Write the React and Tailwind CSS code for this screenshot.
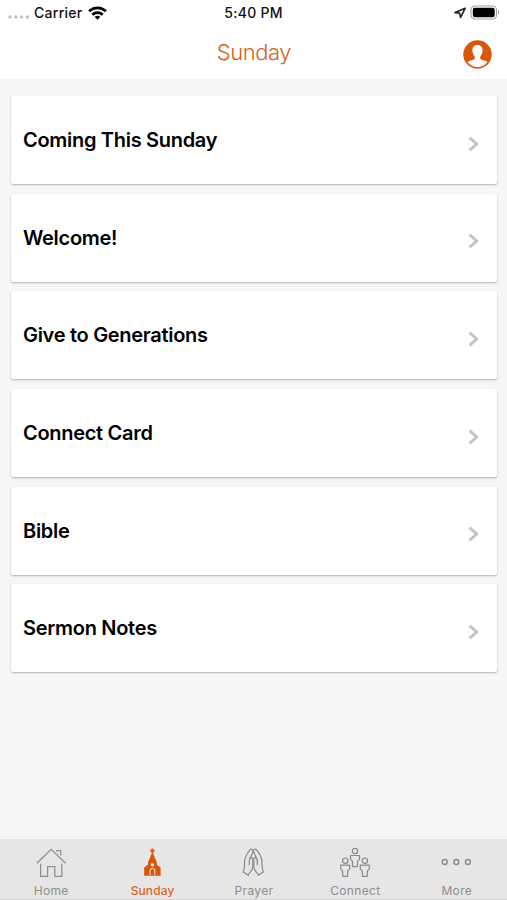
const sections = [
  'Coming This Sunday',
  'Welcome!',
  'Give to Generations',
  'Connect Card',
  'Bible',
  'Sermon Notes',
];

function StatusBar() {
  return (
    <div className="grid h-[26px] grid-cols-3 items-center text-[14px] font-medium text-[#111]">
      <div className="flex items-center pl-2">
        <svg width="22" height="6" viewBox="0 0 22 6" fill="#c4c4c4" className="mt-[7px]">
          <circle cx="2" cy="3" r="1.8" />
          <circle cx="7.8" cy="3" r="1.8" />
          <circle cx="13.6" cy="3" r="1.8" />
          <circle cx="19.4" cy="3" r="1.8" />
        </svg>
        <span className="-mt-px ml-1 tracking-[0.02em]">Carrier</span>
        <svg width="19" height="14" viewBox="0 0 19 14" fill="none" stroke="#000" strokeWidth="2.7" className="-mt-px ml-[5px]">
          <path d="M1.1 5.3C5.7 .7 13.3 .7 17.9 5.3" />
          <path d="M4.3 8.8C7.2 6 11.8 6 14.7 8.8" />
          <path d="M9.5 13.7 6.7 10.9C8.3 9.5 10.7 9.5 12.3 10.9Z" fill="#000" stroke="none" />
        </svg>
      </div>
      <span className="-mt-px text-center tracking-[0.02em]">5:40 PM</span>
      <div className="flex items-center justify-end pr-[7px]">
        <svg width="12" height="12" viewBox="0 0 12 12" fill="none" stroke="#222" strokeWidth="1.6" strokeLinejoin="round">
          <path d="M11.2 1.2 1 5.6l4.6.5 1 4.3Z" />
        </svg>
        <svg width="30" height="15" viewBox="0 0 30 15" className="-mt-px ml-1">
          <rect x="1" y="1" width="25.5" height="13" rx="4" fill="#fff" stroke="#a3a3a3" strokeWidth="1.2" />
          <rect x="2.8" y="2.7" width="21.9" height="9.6" rx="2.2" fill="#000" />
          <path d="M27.9 5.3c1.7.6 1.7 3.8 0 4.4Z" fill="#a3a3a3" />
        </svg>
      </div>
    </div>
  );
}

function Header() {
  return (
    <div className="grid h-[53px] grid-cols-[1fr_auto_1fr] items-center">
      <span />
      <h1 className="-mt-px pl-px text-[22px] font-light leading-none tracking-[-0.45px] text-[#d65f22]">Sunday</h1>
      <svg width="29" height="29" viewBox="0 0 29 29" className="mr-[15px] mt-[3px] justify-self-end">
        <circle cx="14.5" cy="14.5" r="14.2" fill="#d9560b" />
        <path
          d="M14.5 4.9c3.3 0 5.1 2 5.1 5.2 0 2.8-.8 5-2.3 6.3v2.3c0 1.4 5.4 1.4 7.2 3.4A12.4 12.4 0 0 1 4.5 22.1c1.8-2 7.2-2 7.2-3.4v-2.3c-1.5-1.3-2.3-3.5-2.3-6.3 0-3.2 1.8-5.2 5.1-5.2Z"
          fill="#fff"
        />
      </svg>
    </div>
  );
}

function HomeIcon() {
  return (
    <svg width="30" height="30" viewBox="0 0 30 30" fill="none" stroke="#8e8e8e" strokeWidth="1.25">
      <path d="M.9 16.3 15.2 2.4l14.3 13.9M20 3.5h4.8v4.9M4.6 16.7v12.6h7V19.5h7.2v9.8h7V16.7" />
    </svg>
  );
}

function ChurchIcon() {
  return (
    <svg width="18" height="30" viewBox="0 0 18 30" fill="#d9560b">
      <path d="M8.5 1.4h1.8v1.5h1.4v1.6h-1.4v2.4l3.5 8.3v2.3l3.8 2.9v8.3H1.2v-8.3L5 17.5v-2.3l3.5-8.3V4.5H7.1V2.9h1.4Z" />
      <circle cx="9.4" cy="17.7" r="1.7" fill="#f0f0f0" />
      <path d="M7 28v-4.2a2.4 2.4 0 0 1 4.8 0V28" fill="none" stroke="#eee" strokeWidth="1" />
    </svg>
  );
}

function PrayerIcon() {
  return (
    <svg width="22" height="30" viewBox="0 0 22 30" fill="none" stroke="#898989" strokeWidth="1.2" strokeLinejoin="round" strokeLinecap="round">
      <path d="M11.3 4.2C10.9 2 9.2 1.5 8 2.8 5.2 6 2.9 9.5 2.6 14.5c-.2 4 .2 7-1.3 10.6l4.9 3.2c.8-3 4.6-4.6 4.6-8V11.2c-1.7-1.2-3.5.2-3.5 2.2v4.2" />
      <path d="M11.3 4.2c.4-2.2 2.1-2.7 3.3-1.4 2.8 3.2 5.1 6.7 5.4 11.7.2 4-.2 7 1.3 10.6l-4.9 3.2c-.8-3-4.6-4.6-4.6-8V11.2c1.7-1.2 3.5.2 3.5 2.2v4.2" />
      <path d="M11.3 4.2 7.8 12M11.3 4.2l3.5 7.8" />
    </svg>
  );
}

function Person({ x, y }) {
  return (
    <g transform={`translate(${x} ${y})`}>
      <circle cx="5" cy="3.4" r="2.7" />
      <path d="M.5 7.9h9v3.9l-1.8 1.5-.4 5.7H2.7l-.4-5.7-1.8-1.5Z" />
    </g>
  );
}

function ConnectIcon() {
  return (
    <svg width="30" height="30" viewBox="0 0 30 30" fill="none" stroke="#898989" strokeWidth="1.2" strokeLinejoin="round">
      <Person x={10} y={0.6} />
      <Person x={0.2} y={10.3} />
      <Person x={19.8} y={10.3} />
    </svg>
  );
}

function MoreIcon() {
  return (
    <svg width="30" height="30" viewBox="0 0 30 30" fill="none" stroke="#898989" strokeWidth="1.4">
      <circle cx="3.7" cy="15" r="2.5" />
      <circle cx="15.3" cy="15" r="2.5" />
      <circle cx="26.9" cy="15" r="2.5" />
    </svg>
  );
}

const tabs = [
  { label: 'Home', Icon: HomeIcon },
  { label: 'Sunday', Icon: ChurchIcon, active: true },
  { label: 'Prayer', Icon: PrayerIcon },
  { label: 'Connect', Icon: ConnectIcon },
  { label: 'More', Icon: MoreIcon },
];

export default function App() {
  return (
    <div className="flex h-[900px] w-[507px] flex-col bg-[#f6f6f6] font-['Inter',sans-serif]">
      <header className="bg-white">
        <StatusBar />
        <Header />
      </header>

      <main className="flex flex-1 flex-col gap-[9.7px] px-[10.5px] pt-[17px]">
        {sections.map(title => (
          <div
            key={title}
            className="flex h-[88px] items-center justify-between rounded-[2px] bg-white pl-[12.5px] pr-[18px] shadow-[0_1px_2px_rgba(0,0,0,0.28)]"
          >
            <span className="text-[20px] font-semibold leading-6 tracking-[-0.3px] text-black">{title}</span>
            <svg width="11" height="16" viewBox="0 0 11 16" fill="none" stroke="#c4c4c4" strokeWidth="3" className="mt-[7px]">
              <path d="M1.6 1.6 8.6 8l-7 6.4" />
            </svg>
          </div>
        ))}
      </main>

      <nav className="grid h-[61px] grid-cols-5 border-b border-[#d4d4d4] bg-[#e6e6e6] pt-2">
        {tabs.map(({ label, Icon, active }) => (
          <div key={label} className="flex flex-col items-center">
            <Icon />
            <span
              className={`mt-[6px] pl-px text-[12px] leading-4 ${active ? 'font-medium tracking-[0.01em] text-[#dc6526]' : 'tracking-[0.03em] text-[#8e8e8e]'}`}
            >
              {label}
            </span>
          </div>
        ))}
      </nav>
    </div>
  );
}
